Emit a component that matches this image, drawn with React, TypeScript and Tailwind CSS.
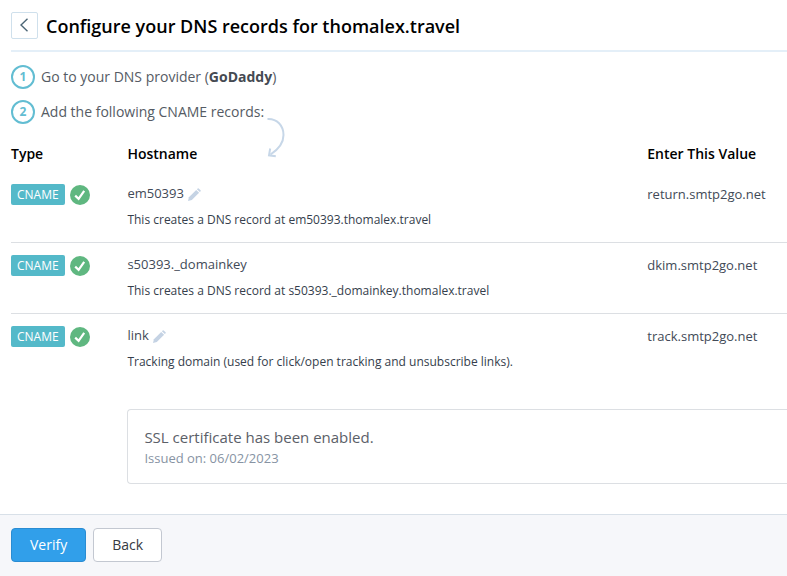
type DnsRecord = {
  hostname: string;
  editable: boolean;
  description: string;
  value: string;
};

const records: DnsRecord[] = [
  {
    hostname: 'em50393',
    editable: true,
    description: 'This creates a DNS record at em50393.thomalex.travel',
    value: 'return.smtp2go.net',
  },
  {
    hostname: 's50393._domainkey',
    editable: false,
    description: 'This creates a DNS record at s50393._domainkey.thomalex.travel',
    value: 'dkim.smtp2go.net',
  },
  {
    hostname: 'link',
    editable: true,
    description: 'Tracking domain (used for click/open tracking and unsubscribe links).',
    value: 'track.smtp2go.net',
  },
];

function CheckIcon() {
  return (
    <svg width="20" height="20" viewBox="0 0 20 20" role="img" aria-label="Verified">
      <circle cx="10" cy="10" r="10" fill="#5fb780" />
      <path d="M5.2 10.6 8.6 13.800 14.2 5.800" fill="none" stroke="#fff" strokeWidth="2.2" />
    </svg>
  );
}

function PencilIcon() {
  return (
    <svg width="13" height="13" viewBox="0 0 13 13" fill="#c5d3e4" aria-hidden="true">
      <path d="M0 13 0.900 9.200 8.2 1.900 11.100 4.800 3.8 12.100Z" />
      <path d="M8.900 1.200 9.700 0.400Q10.200 0 10.700 0.400L12.600 2.300Q13 2.800 12.600 3.300L11.800 4.100Z" />
    </svg>
  );
}

function CurvedArrow() {
  return (
    <svg
      className="absolute top-3.5 left-full ml-[3px]"
      width="20"
      height="42"
      viewBox="0 0 20 42"
      fill="none"
      stroke="#c7d7e8"
      strokeWidth="2"
      aria-hidden="true"
    >
      <path d="M0.5 3C10 2.5 16.500 9.500 16.500 19C16.500 27 12 33 3.500 38.500" />
      <path d="M3.200 32.500 2 39.300 8.800 40.300" />
    </svg>
  );
}

function StepNumber({ value }: { value: number }) {
  return (
    <span className="flex size-6 items-center justify-center rounded-full border-2 border-[#62bdd2] text-xs leading-none font-bold text-[#62bdd2]">
      {value}
    </span>
  );
}

function RecordRow({ record, last }: { record: DnsRecord; last: boolean }) {
  return (
    <tr className={last ? '' : 'border-b border-[#dcdfe3]'}>
      <td className="pt-3 align-top">
        <div className="flex items-center gap-[5px]">
          <span className="rounded-xs bg-[#54b9c9] px-1.5 text-xs leading-[21px] text-white">CNAME</span>
          <CheckIcon />
        </div>
      </td>
      <td className="pt-2.5 pb-3 align-top">
        <div className="flex h-6 items-center gap-1 text-[13px] text-[#424a57]">
          {record.hostname}
          {record.editable && (
            <button type="button" aria-label={`Edit ${record.hostname}`}>
              <PencilIcon />
            </button>
          )}
        </div>
        <p className="mt-1 text-xs leading-5 text-[#353e4c]">{record.description}</p>
      </td>
      <td className="pt-2.5 align-top text-[13px] leading-6 text-[#424a57]">{record.value}</td>
    </tr>
  );
}

export default function App() {
  return (
    <div className="flex min-h-screen flex-col overflow-x-hidden bg-white font-['Open_Sans','Noto_Sans',sans-serif]">
      <main className="pl-[11px]">
        <header className="flex h-[52px] items-center gap-2 border-b-2 border-[#e4eff8]">
          <button
            type="button"
            aria-label="Go back"
            className="flex size-[27px] items-center justify-center rounded-xs border border-[#cfe0ec]"
          >
            <svg width="9" height="14" viewBox="0 0 9 14" fill="none" stroke="#4b6575" strokeWidth="1.400" aria-hidden="true">
              <path d="M7.500 0.800 1 7 7.500 13.200" />
            </svg>
          </button>
          <h1 className="pt-0.5 text-lg font-semibold text-black">Configure your DNS records for thomalex.travel</h1>
        </header>

        <ol className="mt-[13px] flex flex-col gap-[11px] text-sm text-[#555b64]">
          <li className="flex items-center gap-1.5">
            <StepNumber value={1} />
            <span>
              Go to your DNS provider (<strong className="font-bold text-[#454a52]">GoDaddy</strong>)
            </span>
          </li>
          <li className="flex items-center gap-1.5">
            <StepNumber value={2} />
            <span className="relative">
              Add the following CNAME records:
              <CurvedArrow />
            </span>
          </li>
        </ol>

        <table className="mt-[11px] w-full table-fixed border-collapse text-left">
          <thead>
            <tr className="h-[37px] text-sm font-semibold text-black">
              <th scope="col" className="w-[15%] font-semibold">Type</th>
              <th scope="col" className="w-[67%] font-semibold">Hostname</th>
              <th scope="col" className="font-semibold">Enter This Value</th>
            </tr>
          </thead>
          <tbody>
            {records.map((record, index) => (
              <RecordRow key={record.hostname} record={record} last={index === records.length - 1} />
            ))}
            <tr>
              <td />
              <td colSpan={2} className="pt-[25px]">
                <section className="rounded-l-sm border border-r-0 border-[#dcdfe3] px-4 pt-[15px] pb-4">
                  <p className="text-[15px] leading-6 text-[#5b6068]">SSL certificate has been enabled.</p>
                  <p className="text-[13px] leading-[18px] text-[#8793a3]">Issued on: 06/02/2023</p>
                </section>
              </td>
            </tr>
          </tbody>
        </table>
      </main>

      <footer className="mt-[30px] flex flex-1 items-start gap-[7px] border-t border-[#d8e0e8] bg-[#f6f7fa] px-[11px] pt-[13px] pb-3.5 text-sm">
        <button type="button" className="h-[34px] rounded-sm border border-[#2a8cd2] bg-[#319fea] px-[18px] text-white">
          Verify
        </button>
        <button type="button" className="h-[34px] rounded-sm border border-[#c3c8d1] bg-white px-[18px] text-[#353a42]">
          Back
        </button>
      </footer>
    </div>
  );
}
